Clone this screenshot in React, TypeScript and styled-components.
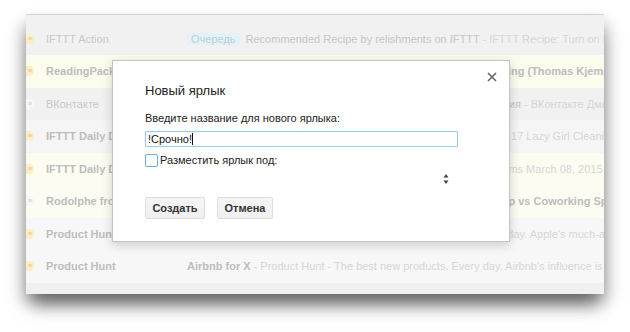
import styled, { createGlobalStyle } from "styled-components";

const GlobalStyle = createGlobalStyle`
  body {
    margin: 0;
    background: #ffffff;
    font-family: "Liberation Sans", Arial, sans-serif;
  }
`;

interface IMessage {
  marker: "yellow" | "gray";
  sender: string;
  unread: boolean;
  label?: string;
  subject: string;
  snippet: string;
  bg: string;
  tall?: boolean;
}

const messages: IMessage[] = [
  {
    marker: "yellow",
    sender: "IFTTT Action",
    unread: false,
    label: "Очередь",
    subject: "Recommended Recipe by relishments on IFTTT",
    snippet: " - IFTTT Recipe: Turn on Ringer when you get home",
    bg: "#f1f1f1",
    tall: true,
  },
  {
    marker: "yellow",
    sender: "ReadingPack",
    unread: true,
    subject: "Your Weekly ReadingPack: The Science of Fast Remote Working (Thomas Kjemperud)",
    snippet: "",
    bg: "#fbfbee",
  },
  {
    marker: "gray",
    sender: "ВКонтакте",
    unread: false,
    subject: "Дмитрий Петров прокомментировал Вашу запись — Фотография",
    snippet: " - ВКонтакте Дмитрий Петров",
    bg: "#f1f1f1",
  },
  {
    marker: "yellow",
    sender: "IFTTT Daily Digest",
    unread: true,
    subject: "Your Daily Digest",
    snippet: " - Lifehacker Articles: The Best Posts for Today: 17 Lazy Girl Cleaning Hacks",
    bg: "#f5f5f5",
  },
  {
    marker: "yellow",
    sender: "IFTTT Daily Digest",
    unread: true,
    subject: "Your Daily Digest",
    snippet: " - Here are your daily digest, of the new feed items March 08, 2015",
    bg: "#fcfcf0",
  },
  {
    marker: "gray",
    sender: "Rodolphe from Coworkify",
    unread: true,
    subject: "Where Could You Work Now? Home Office, Bar or Coffee Shop vs Coworking Space",
    snippet: "",
    bg: "#fcfcf2",
  },
  {
    marker: "yellow",
    sender: "Product Hunt",
    unread: true,
    subject: "Apple Watch iOS",
    snippet: " - Product Hunt - The best new products. Every day. Apple's much-awaited",
    bg: "#f7f7f7",
  },
  {
    marker: "yellow",
    sender: "Product Hunt",
    unread: true,
    subject: "Airbnb for X",
    snippet: " - Product Hunt - The best new products. Every day. Airbnb's influence is undeniable",
    bg: "#f7f7f7",
  },
  {
    marker: "yellow",
    sender: "Product Hunt",
    unread: true,
    subject: "Dark Sky",
    snippet: " - Product Hunt - The best new products. Every day. Weather app",
    bg: "#f0f0f0",
  },
];

const Page = styled.div`
  width: 630px;
  height: 332px;
  padding: 14px 26px 0;
  box-sizing: border-box;
  overflow: hidden;
`;

const Window = styled.div`
  position: relative;
  width: 578px;
  height: 280px;
  overflow: hidden;
  border-top: 1px solid #d2d2d2;
  box-sizing: border-box;
  box-shadow: 0 14px 18px -4px rgba(0, 0, 0, 0.52), -6px 8px 14px rgba(0, 0, 0, 0.13),
    6px 8px 14px rgba(0, 0, 0, 0.13);
`;

const List = styled.div`
  display: flex;
  flex-direction: column;
`;

const Row = styled.div<{ $bg: string; $tall?: boolean }>`
  display: flex;
  align-items: center;
  flex-shrink: 0;
  overflow: hidden;
  height: ${(p) => (p.$tall ? "40px" : "32.5px")};
  padding-top: ${(p) => (p.$tall ? "8px" : "0")};
  box-sizing: border-box;
  background: ${(p) => p.$bg};
  font-size: 11px;
  white-space: nowrap;
`;

const Marker = styled.span<{ $yellow: boolean }>`
  flex-shrink: 0;
  width: 8px;
  height: 10px;
  margin-right: 12px;
  border-radius: 0 5px 5px 0;
  background: ${(p) => (p.$yellow ? "#fbeec2" : "#f7f7f7")};
  color: ${(p) => (p.$yellow ? "#e2cf97" : "#d4d4d4")};
  font-size: 8px;
  line-height: 10px;
  text-align: center;
  font-weight: bold;
`;

const Sender = styled.span<{ $unread: boolean }>`
  flex: 0 0 141px;
  overflow: hidden;
  color: ${(p) => (p.$unread ? "#bdbdbd" : "#c9c9c9")};
  font-weight: ${(p) => (p.$unread ? "bold" : "normal")};
`;

const Content = styled.span`
  flex: 1 1 auto;
  min-width: 0;
  overflow: hidden;
`;

const Label = styled.span`
  background: #e3f2f7;
  color: #bccfd6;
  padding: 2px 4px;
  margin-right: 6px;
`;

const Subject = styled.span<{ $unread: boolean }>`
  color: ${(p) => (p.$unread ? "#bdbdbd" : "#c6c6c6")};
  font-weight: ${(p) => (p.$unread ? "bold" : "normal")};
`;

const Snippet = styled.span`
  color: #d6d6d6;
`;

const Dialog = styled.div`
  position: absolute;
  left: 86px;
  top: 45px;
  width: 398px;
  height: 182px;
  box-sizing: border-box;
  background: #ffffff;
  border: 1px solid #c4c4c4;
  box-shadow: 0 3px 10px rgba(0, 0, 0, 0.18);
  padding: 0 0 0 32px;
  display: flex;
  flex-direction: column;
  color: #222222;
`;

const Close = styled.span`
  position: absolute;
  right: 10px;
  top: 9px;
  width: 14px;
  height: 14px;
  display: flex;
  align-items: center;
  justify-content: center;
`;

const Title = styled.div`
  margin-top: 22px;
  font-size: 13px;
  line-height: 16px;
  color: #222222;
`;

const FieldLabel = styled.div`
  margin-top: 12px;
  font-size: 11px;
  line-height: 14px;
  color: #222222;
`;

const Input = styled.div`
  margin-top: 6px;
  width: 313px;
  height: 16px;
  box-sizing: border-box;
  border: 1px solid #92cbf5;
  border-radius: 1px;
  padding: 0 2px;
  font-size: 11px;
  line-height: 14px;
  color: #111111;
  display: flex;
  align-items: center;
`;

const Caret = styled.span`
  width: 1px;
  height: 12px;
  background: #111111;
`;

const CheckRow = styled.label`
  margin-top: 7px;
  display: flex;
  align-items: center;
  gap: 2px;
  font-size: 11px;
  line-height: 13px;
`;

const Box = styled.span`
  width: 13px;
  height: 13px;
  box-sizing: border-box;
  border: 1.5px solid #6aa9e6;
  border-radius: 2px;
  background: #ffffff;
`;

const Spinner = styled.div`
  margin-top: 6px;
  padding-left: 298px;
  display: flex;
  flex-direction: column;
  height: 12px;
`;

const Buttons = styled.div`
  margin-top: 12px;
  display: flex;
  gap: 12px;
`;

const Button = styled.button<{ $width: number }>`
  width: ${(p) => p.$width}px;
  height: 22px;
  margin: 0;
  padding: 0;
  border: 1px solid #dcdcdc;
  border-radius: 2px;
  background: linear-gradient(#f5f5f5, #f0f0f0);
  font-family: "Liberation Sans", Arial, sans-serif;
  font-size: 11px;
  font-weight: bold;
  color: #333333;
`;

const App = () => {
  return (
    <>
      <GlobalStyle />
      <Page>
        <Window>
          <List>
            {messages.map((m, i) => (
              <Row key={i} $bg={m.bg} $tall={m.tall}>
                <Marker $yellow={m.marker === "yellow"}>»</Marker>
                <Sender $unread={m.unread}>{m.sender}</Sender>
                <Content>
                  {m.label && <Label>{m.label}</Label>}
                  <Subject $unread={m.unread}>{m.subject}</Subject>
                  <Snippet>{m.snippet}</Snippet>
                </Content>
              </Row>
            ))}
          </List>

          <Dialog>
            <Close>
              <svg width="10" height="10" viewBox="0 0 10 10">
                <path d="M1 1 L9 9 M9 1 L1 9" stroke="#6a6a6a" strokeWidth="1.7" />
              </svg>
            </Close>
            <Title>Новый ярлык</Title>
            <FieldLabel>Введите название для нового ярлыка:</FieldLabel>
            <Input>
              !Срочно!
              <Caret />
            </Input>
            <CheckRow>
              <Box />
              Разместить ярлык под:
            </CheckRow>
            <Spinner>
              <svg width="6" height="12" viewBox="0 0 6 12">
                <path d="M3 1 L5.5 4.5 L0.5 4.5 Z M3 11 L5.5 7.5 L0.5 7.5 Z" fill="#444" />
              </svg>
            </Spinner>
            <Buttons>
              <Button $width={60}>Создать</Button>
              <Button $width={56}>Отмена</Button>
            </Buttons>
          </Dialog>
        </Window>
      </Page>
    </>
  );
};

export default App;
